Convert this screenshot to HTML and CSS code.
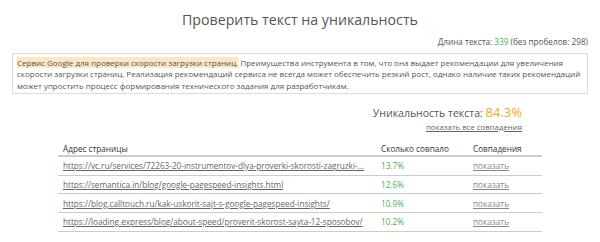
FILE: index.html
```html
<!DOCTYPE html>
<html lang="ru">
<head>
  <meta charset="UTF-8" />
  <title>Проверить текст на уникальность</title>
  <link rel="stylesheet" href="styles.css">
</head>
<body>
  <h1>Проверить текст на уникальность</h1>
  <div class="text-length">Длина текста: <span class="green">339</span> (без пробелов: 298)</div>
  <div class="text-box">
    <span class="mark">Сервис Google для проверки скорости загрузки страниц.</span> Преимущества инструмента в том, что она выдает рекомендации для увеличения скорости загрузки страниц. Реализация рекомендаций сервиса не всегда может обеспечить резкий рост, однако наличие таких рекомендаций может упростить процесс формирования технического задания для разработчикам.
  </div>

  <div class="result">
    <div class="uniq">Уникальность текста: <span class="uniq-value">84.3%</span></div>
    <a href="#" class="all-link">показать все совпадения</a>
  </div>

  <table class="matches">
    <thead>
      <tr>
        <th class="col-url">Адрес страницы</th>
        <th class="col-pct">Сколько совпало</th>
        <th>Совпадения</th>
      </tr>
    </thead>
    <tbody>
      <tr>
        <td><a href="#">https://vc.ru/services/72263-20-instrumentov-dlya-proverki-skorosti-zagruzki-...</a></td>
        <td class="green">13.7%</td>
        <td><a href="#" class="show">показать</a></td>
      </tr>
      <tr>
        <td><a href="#">https://semantica.in/blog/google-pagespeed-insights.html</a></td>
        <td class="green">12.6%</td>
        <td><a href="#" class="show">показать</a></td>
      </tr>
      <tr>
        <td><a href="#">https://blog.calltouch.ru/kak-uskorit-sajt-s-google-pagespeed-insights/</a></td>
        <td class="green">10.9%</td>
        <td><a href="#" class="show">показать</a></td>
      </tr>
      <tr>
        <td><a href="#">https://loading.express/blog/about-speed/proverit-skorost-sayta-12-sposobov/</a></td>
        <td class="green">10.2%</td>
        <td><a href="#" class="show">показать</a></td>
      </tr>
    </tbody>
  </table>
</body>
</html>
```

FILE: styles.css
```css
body {
  font-family: "Open Sans", "Noto Sans", sans-serif;
  margin: 0;
  padding: 0 12px;
  background-color: #fff;
  color: #555;
}
h1 {
  font-size: 14.2px;
  font-weight: 400;
  text-align: center;
  margin: 0;
  padding-top: 8px;
  line-height: 24px;
  color: #555;
}
.text-length {
  text-align: right;
  font-size: 8.2px;
  line-height: 12px;
  margin-top: 4px;
  color: #555;
}
.green {
  color: #4cae4c;
}
.text-box {
  margin-top: 5px;
  border: 1px solid #ddd;
  padding: 3px 0 2px 4px;
  font-size: 8px;
  line-height: 11.3px;
  color: #555;
}
.mark {
  background-color: #fde6c2;
}
.result {
  margin-top: 10px;
  margin-right: 66px;
  text-align: right;
}
.uniq {
  font-size: 10.5px;
  line-height: 16px;
  color: #555;
}
.uniq-value {
  font-size: 13px;
  color: #f5a623;
}
.all-link {
  display: block;
  font-size: 7.8px;
  line-height: 12px;
  color: #666;
}
.matches {
  width: 484px;
  margin: 7px auto 0;
  border-collapse: collapse;
  font-size: 8.2px;
}
.matches th {
  text-align: left;
  font-weight: 400;
  color: #333;
  padding: 3px 5px 0;
  line-height: 12px;
  border-bottom: 2px solid #ccc;
}
.matches td {
  padding: 0 5px;
  height: 17.7px;
  white-space: nowrap;
  border-bottom: 1px solid #ccc;
}
.col-url {
  width: 308px;
}
.col-pct {
  width: 82px;
}
.matches a {
  color: #666;
}
.matches a.show {
  color: #888;
}
```
